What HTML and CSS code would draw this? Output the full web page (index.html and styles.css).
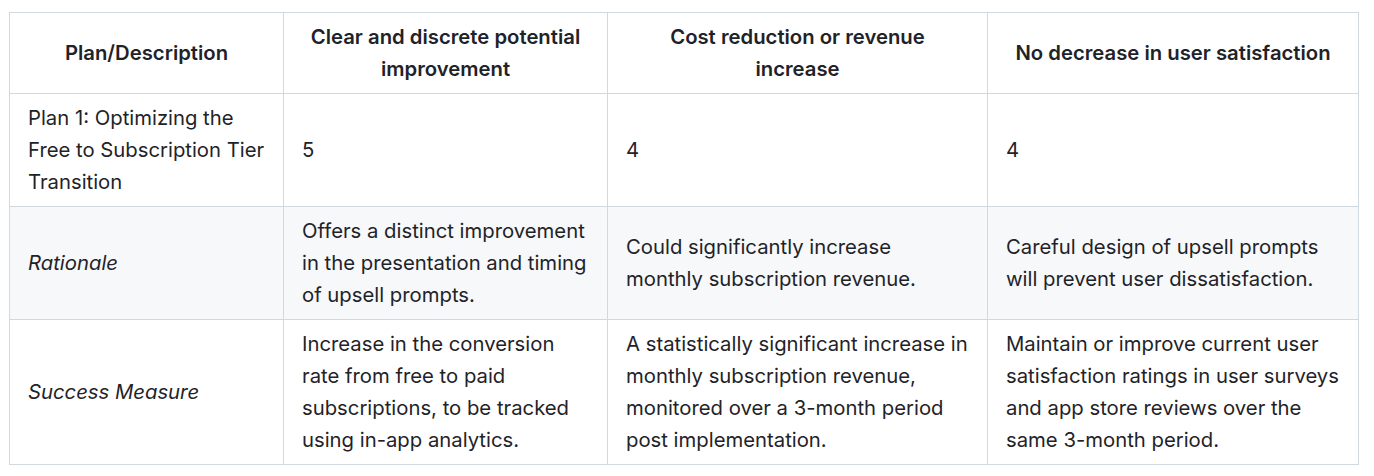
FILE: index.html
```html
<!DOCTYPE html>
<html>
<head>
<meta charset="utf-8">
<link rel="stylesheet" href="styles.css">
</head>
<body>
<div class="wrap">
<table class="grid">
  <colgroup>
    <col class="c1"><col class="c2"><col class="c3"><col class="c4">
  </colgroup>
  <thead>
    <tr>
      <th>Plan/Description</th>
      <th>Clear and discrete potential improvement</th>
      <th>Cost reduction or revenue increase</th>
      <th>No decrease in user satisfaction</th>
    </tr>
  </thead>
  <tbody>
    <tr>
      <td>Plan 1: Optimizing the Free to Subscription Tier Transition</td>
      <td>5</td>
      <td>4</td>
      <td>4</td>
    </tr>
    <tr class="alt">
      <td><em>Rationale</em></td>
      <td>Offers a distinct improvement in the presentation and timing of upsell prompts.</td>
      <td>Could significantly increase monthly subscription revenue.</td>
      <td>Careful design of upsell prompts will prevent user dissatisfaction.</td>
    </tr>
    <tr>
      <td><em>Success Measure</em></td>
      <td>Increase in the conversion rate from free to paid subscriptions, to be tracked using in-app analytics.</td>
      <td>A statistically significant increase in monthly subscription revenue, monitored over a 3-month period post implementation.</td>
      <td>Maintain or improve current user satisfaction ratings in user surveys and app store reviews over the same 3-month period.</td>
    </tr>
  </tbody>
</table>
</div>
</body>
</html>
```
FILE: styles.css
```css
html, body {
  margin: 0;
  padding: 0;
  background: #ffffff;
}
.wrap {
  padding: 12px 0 0 9px;
}
.grid {
  border-collapse: collapse;
  table-layout: fixed;
  width: 1349px;
  font-family: Inter, "Liberation Sans", sans-serif;
  font-size: 20.3px;
  line-height: 32px;
  color: #1f2328;
}
.c1 { width: 274px; }
.c2 { width: 324px; }
.c3 { width: 380px; }
.c4 { width: 371px; }
.grid th, .grid td {
  border: 1px solid #d1d9e0;
  padding: 8px 18px;
  vertical-align: middle;
}
.grid th {
  font-weight: 600;
  text-align: center;
}
.grid td {
  text-align: left;
  font-weight: 400;
}
.grid tr.alt td {
  background: #f6f8fa;
}
.grid em {
  font-style: italic;
}
```
